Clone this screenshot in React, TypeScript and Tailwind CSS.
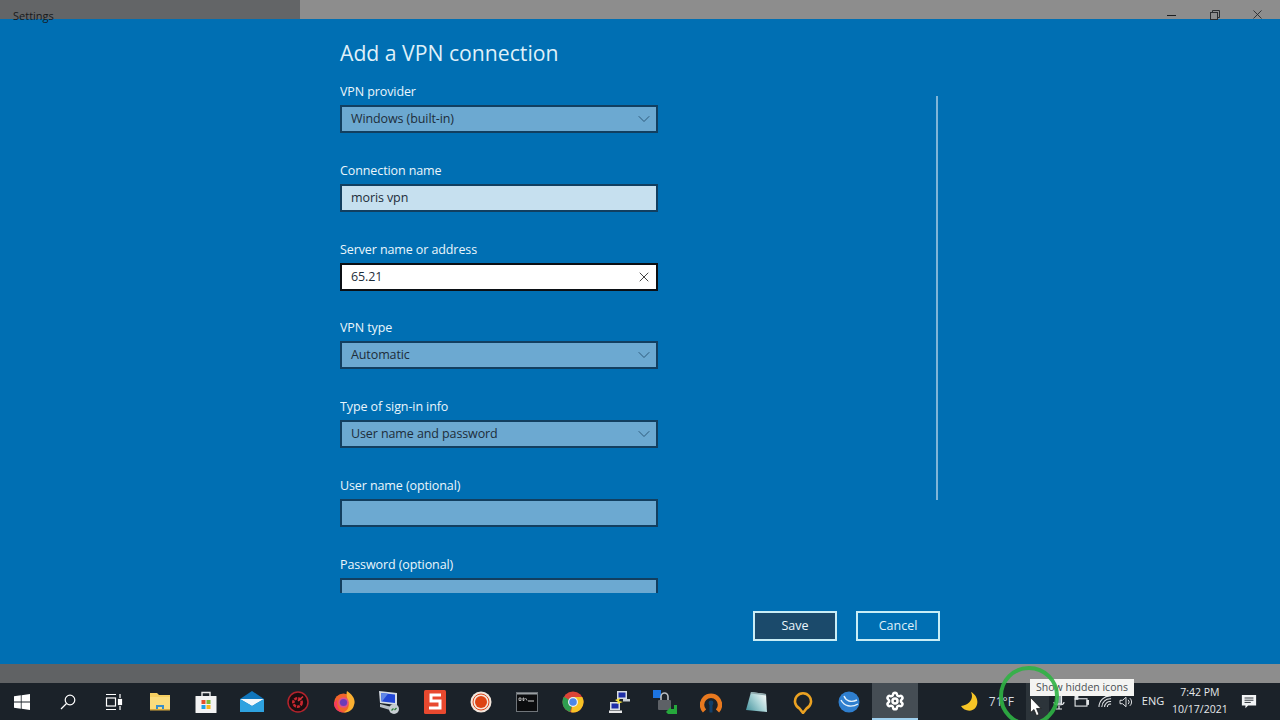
import { ChevronDown, Settings, X } from 'lucide-react';
import type { ReactNode } from 'react';

const font = { fontFamily: '"Open Sans", "Noto Sans", sans-serif' };

interface FieldProps {
  label: string;
  value?: string;
  kind: 'select' | 'disabled' | 'focused' | 'empty';
}

const fields: FieldProps[] = [
  { label: 'VPN provider', value: 'Windows (built-in)', kind: 'select' },
  { label: 'Connection name', value: 'moris vpn', kind: 'disabled' },
  { label: 'Server name or address', value: '65.21', kind: 'focused' },
  { label: 'VPN type', value: 'Automatic', kind: 'select' },
  { label: 'Type of sign-in info', value: 'User name and password', kind: 'select' },
  { label: 'User name (optional)', kind: 'empty' },
  { label: 'Password (optional)', kind: 'empty' },
];

function Field({ label, value, kind }: FieldProps) {
  const boxClass =
    kind === 'focused'
      ? 'bg-white border-[#0b0f14]'
      : kind === 'disabled'
        ? 'bg-[#c6e0ef] border-[#123f60]'
        : 'bg-[#6ca9d1] border-[#123f60]';

  return (
    <div className="h-[78.8px] shrink-0">
      <div className="h-[22px] text-[12.5px] leading-[18px] tracking-[-0.1px] text-[#eaf6fc]">{label}</div>
      <div className={`flex h-[28px] w-[318px] items-center justify-between border-2 pl-[9px] ${boxClass}`}>
        <span className="text-[12.5px] leading-[18px] tracking-[-0.1px] text-[#1d2d3a]">{value}</span>
        {kind === 'select' && <ChevronDown className="mr-[2px] h-5 w-5 text-[#2f5b7b]" strokeWidth={1.2} />}
        {kind === 'focused' && <X className="mr-[4px] h-4 w-4 text-[#444]" strokeWidth={1.5} />}
      </div>
    </div>
  );
}

const WinLogo = () => (
  <svg viewBox="0 0 16 16" className="h-4 w-4" fill="#fff">
    <path d="M0 2.3 6.8 1.3V7.5H0ZM7.6 1.2 16 0V7.5H7.6ZM0 8.4H6.8V14.7L0 13.7ZM7.6 8.4H16V16L7.6 14.8Z" />
  </svg>
);

const SearchGlass = () => (
  <svg viewBox="0 0 16 16" className="h-4 w-4" fill="none" stroke="#fff" strokeWidth="1.2">
    <circle cx="10" cy="6" r="4.8" />
    <path d="M6.5 9.5 1 15" />
  </svg>
);

const TaskView = () => (
  <svg viewBox="0 0 18 18" className="h-[18px] w-[18px]" fill="none" stroke="#fff" strokeWidth="1.2">
    <path d="M1 1.5H11M1 16.5H11" />
    <rect x="1.5" y="5" width="9" height="8" />
    <path d="M15 1V5M15 13V17" />
    <rect x="13.5" y="6.5" width="3" height="5" fill="#fff" />
  </svg>
);

const Folder = () => (
  <svg viewBox="0 0 22 20" className="h-[20px] w-[22px]">
    <path d="M1 1H8L10 3H21V18H1Z" fill="#f6cf61" />
    <path d="M1 5H21V18H1Z" fill="#fbdc7c" />
    <path d="M7 18V13H15V18H13V15H9V18Z" fill="#3a8ec9" />
    <rect x="1" y="17" width="20" height="1.5" fill="#d9a93c" />
  </svg>
);

const Store = () => (
  <svg viewBox="0 0 22 24" className="h-[24px] w-[22px]">
    <path d="M7 6V2.5H15V6" fill="none" stroke="#e9e9e9" strokeWidth="1.4" />
    <rect x="0.5" y="6" width="21" height="17" rx="0.5" fill="#f3f3f3" />
    <rect x="6.5" y="10" width="4" height="4" fill="#e4502b" />
    <rect x="11.5" y="10" width="4" height="4" fill="#7cb833" />
    <rect x="6.5" y="15" width="4" height="4" fill="#1ea2e6" />
    <rect x="11.5" y="15" width="4" height="4" fill="#f7b71c" />
  </svg>
);

const Mail = () => (
  <svg viewBox="0 0 24 22" className="h-[22px] w-[24px]">
    <path d="M0 8 12 0 24 8V21H0Z" fill="#1076bc" />
    <path d="M0 8H24L12 15Z" fill="#f4f8fb" />
    <path d="M0 8 12 15 24 8V21H0Z" fill="#2ea2e0" />
  </svg>
);

const RedGear = () => (
  <svg viewBox="0 0 22 22" className="h-[22px] w-[22px]">
    <circle cx="11" cy="11" r="10" fill="#1a0d10" stroke="#b3232c" strokeWidth="1.5" />
    <circle cx="10.5" cy="11.5" r="4.2" fill="none" stroke="#c9272f" strokeWidth="2.6" strokeDasharray="3 1" />
    <path d="M11 10 16 5.5" stroke="#d6333a" strokeWidth="1.6" />
  </svg>
);

const Firefox = () => (
  <svg viewBox="0 0 22 22" className="h-[22px] w-[22px]">
    <circle cx="10.5" cy="12" r="9.5" fill="#f2652b" />
    <path d="M14 0C20 4 23 9 21 14 20 19 15 22 10 21.5 15 20 17 15 15 10 14 6 13 3 14 0Z" fill="#fbb031" />
    <path d="M1 12C1 18 6 22 11 21.5 6 20 3 16 4.5 8Z" fill="#f53a5c" />
    <circle cx="10.5" cy="11.5" r="5.2" fill="#e0518a" />
    <circle cx="10.5" cy="11.5" r="3.6" fill="#6d3bb8" />
  </svg>
);

const NetPc = () => (
  <svg viewBox="0 0 22 24" className="h-[24px] w-[22px]">
    <path d="M1 1 19 3V15L2 13Z" fill="#d6dce4" />
    <path d="M3 3 17 4.5V13L3.5 11.5Z" fill="#2146d6" />
    <path d="M3 3 10 3.8 4 11.5H3.5Z" fill="#5f86e8" />
    <path d="M2 14 12 16.5V20L2 17Z" fill="#b7bfc8" />
    <circle cx="16" cy="19" r="5" fill="#c7ced2" />
    <path d="M13.5 20.5 15.5 18.5M16.5 20 18.5 18" stroke="#2f7d3b" strokeWidth="1.3" />
  </svg>
);

const SBox = () => (
  <svg viewBox="0 0 22 24" className="h-[24px] w-[22px]">
    <rect width="22" height="24" rx="1.5" fill="#e8492f" />
    <path d="M17 5H7V11H16V18H5" fill="none" stroke="#fff" strokeWidth="3" />
  </svg>
);

const RecDot = () => (
  <svg viewBox="0 0 22 22" className="h-[22px] w-[22px]">
    <circle cx="11" cy="11" r="10.5" fill="#f3e6dc" />
    <circle cx="11" cy="11" r="8" fill="none" stroke="#e0491c" strokeWidth="1" />
    <circle cx="11" cy="11" r="6" fill="#dd4414" />
  </svg>
);

const Cmd = () => (
  <svg viewBox="0 0 22 20" className="h-[20px] w-[22px]">
    <rect x="0.5" y="0.5" width="21" height="19" fill="#0b0c0e" stroke="#70757a" />
    <rect x="1" y="1" width="20" height="1.5" fill="#9a9fa3" />
    <path d="M3 6H5V8.5H3ZM7 6H8V8.5H7ZM9.5 6 11 8.5" stroke="#d8d8d8" strokeWidth="0.8" fill="none" />
    <path d="M12 9H18" stroke="#d8d8d8" />
  </svg>
);

const Chrome = () => (
  <svg viewBox="0 0 22 22" className="h-[22px] w-[22px]">
    <circle cx="11" cy="11" r="10.5" fill="#dc4437" />
    <path d="M11 11 1.8 5.8A10.5 10.5 0 0 0 8 21Z" fill="#2f9e4f" />
    <path d="M11 6H20.2A10.5 10.5 0 0 1 9 21.3L11 11Z" fill="#f7c325" />
    <circle cx="11" cy="11" r="5" fill="#f1f1f1" />
    <circle cx="11" cy="11" r="3.8" fill="#4c86e8" />
  </svg>
);

const Putty = () => (
  <svg viewBox="0 0 22 24" className="h-[24px] w-[22px]">
    <rect x="9" y="1" width="10" height="8" fill="#d8dde3" />
    <rect x="10.5" y="2.5" width="7" height="5" fill="#1e2ea8" />
    <rect x="15" y="9" width="7" height="2.5" fill="#c9ced4" />
    <rect x="2" y="12" width="10" height="8" fill="#d8dde3" />
    <rect x="3.5" y="13.5" width="7" height="5" fill="#1e2ea8" />
    <rect x="1" y="20.5" width="13" height="2.5" fill="#e8e8e8" />
    <path d="M7 10 12 8 11 11 15 12 9 14 10 12Z" fill="#f5e03a" />
  </svg>
);

const VpnLock = () => (
  <svg viewBox="0 0 24 24" className="h-[24px] w-[24px]">
    <rect x="0" y="0" width="8" height="8" fill="#1d74e0" />
    <path d="M8 10V6.5A3.5 3.5 0 0 1 15 6.5V10" fill="none" stroke="#b9bdc1" strokeWidth="1.6" />
    <rect x="5" y="10" width="13" height="10" rx="1" fill="#5d6166" />
    <path d="M13 22 18 16.5V19H21V15L24 15 24 24 15 24Z" fill="#26a83c" />
  </svg>
);

const Arch = () => (
  <svg viewBox="0 0 22 22" className="h-[22px] w-[22px]">
    <path d="M4.5 20A9 9 0 1 1 17.5 20" fill="none" stroke="#e8791f" strokeWidth="4.4" />
    <circle cx="11" cy="12" r="2.4" fill="#12406b" />
    <rect x="9.5" y="12.5" width="3" height="9" fill="#12406b" />
  </svg>
);

const Note = () => (
  <svg viewBox="0 0 22 22" className="h-[22px] w-[22px]">
    <defs>
      <linearGradient id="note-fill" x1="0" y1="1" x2="1" y2="0.3">
        <stop offset="0" stopColor="#3f8f9a" />
        <stop offset="0.6" stopColor="#a9d3d6" />
        <stop offset="1" stopColor="#f1f6f6" />
      </linearGradient>
    </defs>
    <path d="M5 1 20 3 21 21 0 19Z" fill="url(#note-fill)" />
    <path d="M5 1 20 3 20 4.5 4.6 2.5Z" fill="#8fa9ad" />
  </svg>
);

const AmberRing = () => (
  <svg viewBox="0 0 20 24" className="h-[24px] w-[20px]">
    <path d="M6.5 18.5A8 8 0 1 1 13.5 18.5L10 23Z" fill="none" stroke="#eba222" strokeWidth="2.6" strokeLinejoin="round" />
  </svg>
);

const BlueBall = () => (
  <svg viewBox="0 0 22 22" className="h-[22px] w-[22px]">
    <circle cx="11" cy="11" r="10.5" fill="#2f7fcf" />
    <path d="M3 9C6 15 13 17 20 13M6 5C8 10 13 12 19 9" fill="none" stroke="#e6f2fb" strokeWidth="1.4" />
  </svg>
);

const Moon = () => (
  <svg viewBox="0 0 18 20" className="h-[20px] w-[18px]">
    <path d="M11 0C14 6 10 13 1 14 4 19 12 21 16 15 19 10 17 3 11 0Z" fill="#f6c526" />
  </svg>
);

const taskbarIcons: ReactNode[] = [
  <WinLogo />,
  <SearchGlass />,
  <TaskView />,
  <Folder />,
  <Store />,
  <Mail />,
  <RedGear />,
  <Firefox />,
  <NetPc />,
  <SBox />,
  <RecDot />,
  <Cmd />,
  <Chrome />,
  <Putty />,
  <VpnLock />,
  <Arch />,
  <Note />,
  <AmberRing />,
  <BlueBall />,
];

export default function App() {
  return (
    <div className="relative flex h-[720px] w-[1280px] flex-col overflow-hidden bg-[#006fb3]" style={font}>
      {/* title bar of the settings window */}
      <div className="relative z-10 flex h-[19px] shrink-0 bg-[#8d8d8d]">
        <div className="h-full w-[300px] bg-[#636567] pl-[13px] text-[11px] leading-[32px] text-[#17191b]">Settings</div>
        <div className="ml-auto flex h-full items-start text-[#26282a]">
          <div className="flex h-[19px] w-[43px] items-center justify-center">
            <div className="mt-[11px] h-px w-[9px] bg-[#1c1e20]" />
          </div>
          <div className="flex h-[19px] w-[43px] items-center justify-center">
            <svg viewBox="0 0 10 10" className="mt-[11px] h-[10px] w-[10px]" fill="none" stroke="#2c2e30">
              <rect x="0.5" y="2.5" width="7" height="7" />
              <path d="M2.5 2.5V0.5H9.5V7.5H7.5" />
            </svg>
          </div>
          <div className="mr-[1px] flex h-[19px] w-[43px] items-center justify-center">
            <X className="mt-[10px] h-[15px] w-[15px]" strokeWidth={1.4} />
          </div>
        </div>
      </div>

      {/* settings page */}
      <div className="flex h-[645px] shrink-0 pl-[340px]">
        <div className="w-[600px] shrink-0">
          <div className="h-[64px] pt-[19px] text-[21.2px] leading-[30px] text-[#dff0f9]">Add a VPN connection</div>
          <div className="flex h-[510px] flex-col overflow-hidden">
            {fields.map((field) => (
              <Field key={field.label} {...field} />
            ))}
          </div>
          <div className="ml-[413px] mt-[18px] flex gap-[19px]">
            <button className="h-[30px] w-[84px] shrink-0 border-2 border-[#c8edf6] bg-[#1b4a6b] pt-[1px] text-[12.5px] text-[#eaf6fc]">Save</button>
            <button className="h-[30px] w-[84px] shrink-0 border-2 border-[#c8edf6] pt-[1px] text-[12.5px] text-[#dff0f9]">Cancel</button>
          </div>
        </div>
        <div className="-ml-[4px] mt-[77px] h-[404px] w-[2px] bg-[#7fb5d8]" />
      </div>

      {/* strip of the window behind */}
      <div className="flex h-[19px] shrink-0 bg-[#8d8d8d]">
        <div className="h-full w-[300px] bg-[#606264]" />
      </div>

      {/* taskbar */}
      <div className="flex h-[37px] shrink-0 items-center bg-[#1b2229]">
        <div className="-ml-px flex h-full">
          {taskbarIcons.map((icon, i) => (
            <div key={i} className="flex h-full w-[45.95px] items-center justify-center">
              {icon}
            </div>
          ))}
        </div>
        <div className="flex h-full w-[46px] items-center justify-center border-b-2 border-[#9fd0ee] bg-[#454d54]">
          <Settings className="h-[20px] w-[20px] text-white" strokeWidth={3} />
        </div>
        <div className="ml-[41px] flex h-full w-[21px] items-center justify-center">
          <Moon />
        </div>
        <div className="ml-[9px] w-[34px] text-[12px] text-[#d8dde0]">71°F</div>
        <div className="ml-[3px] h-full w-[23px] bg-[#2c343a]" />
        <div className="flex h-full w-[20px] items-center justify-center">
          <svg viewBox="0 0 12 16" className="h-[16px] w-[12px]" fill="none" stroke="#e5e8ea" strokeWidth="1.2">
            <rect x="3.5" y="1" width="5" height="9" rx="1" fill="#8fa0a8" />
            <path d="M1 8C1 12 11 12 11 8M6 12V15M3 15H9" />
          </svg>
        </div>
        <div className="flex h-full w-[25px] items-center justify-center">
          <svg viewBox="0 0 16 12" className="h-[11px] w-[15px]" fill="none" stroke="#e5e8ea" strokeWidth="1.2">
            <rect x="1" y="3" width="13" height="8" />
            <rect x="1" y="0.5" width="3" height="3" fill="#e5e8ea" />
            <rect x="14" y="5" width="2" height="4" fill="#e5e8ea" />
          </svg>
        </div>
        <div className="flex h-full w-[23px] items-center justify-center">
          <svg viewBox="0 0 16 14" className="h-[13px] w-[15px]" fill="none" stroke="#e5e8ea" strokeWidth="1.1">
            <path d="M1 13A12 12 0 0 1 14 1M4 13A9 9 0 0 1 14 4M7 13A6 6 0 0 1 14 7M10 13A3 3 0 0 1 14 10" />
          </svg>
        </div>
        <div className="flex h-full w-[19px] items-center justify-center">
          <svg viewBox="0 0 16 14" className="h-[12px] w-[14px]" fill="none" stroke="#e5e8ea" strokeWidth="1.1">
            <path d="M1 5H4L8 1.5V12.5L4 9H1Z" />
            <path d="M10.5 4.5A3.5 3.5 0 0 1 10.5 9.5M12.5 2.5A6 6 0 0 1 12.5 11.5" />
          </svg>
        </div>
        <div className="ml-[6px] w-[30px] text-[11px] text-[#e5e8ea]">ENG</div>
        <div className="-mt-[2px] flex w-[56px] flex-col items-center text-[10.5px] leading-[17px] text-[#e5e8ea]">
          <span>7:42 PM</span>
          <span>10/17/2021</span>
        </div>
        <div className="flex h-full w-[42px] items-center justify-center">
          <svg viewBox="0 0 18 18" className="h-[16px] w-[16px]">
            <path d="M1 1H17V13H8L5 16V13H1Z" fill="#f1f3f4" />
            <path d="M4 4.5H14M4 7H14M4 9.5H11" stroke="#1b2229" strokeWidth="1" />
          </svg>
        </div>
      </div>

      {/* recording overlay: tooltip, ring and pointer */}
      <div className="absolute left-[1030px] top-[679px] flex h-[17px] w-[104px] items-center justify-center bg-[#f4f4f2] text-[10.5px] text-[#4a4f53]">
        Show hidden icons
      </div>
      <div className="absolute left-[999px] top-[666px] h-[60px] w-[60px] rounded-full border-4 border-[#2fb344]/90" />
      <svg viewBox="0 0 12 19" className="absolute left-[1030px] top-[697px] h-[19px] w-[12px]">
        <path d="M0.5 0.5V15.5L4 12.5 6.5 18.5 9 17.5 6.5 11.5H11Z" fill="#fff" stroke="#111" strokeWidth="0.7" />
      </svg>
    </div>
  );
}
